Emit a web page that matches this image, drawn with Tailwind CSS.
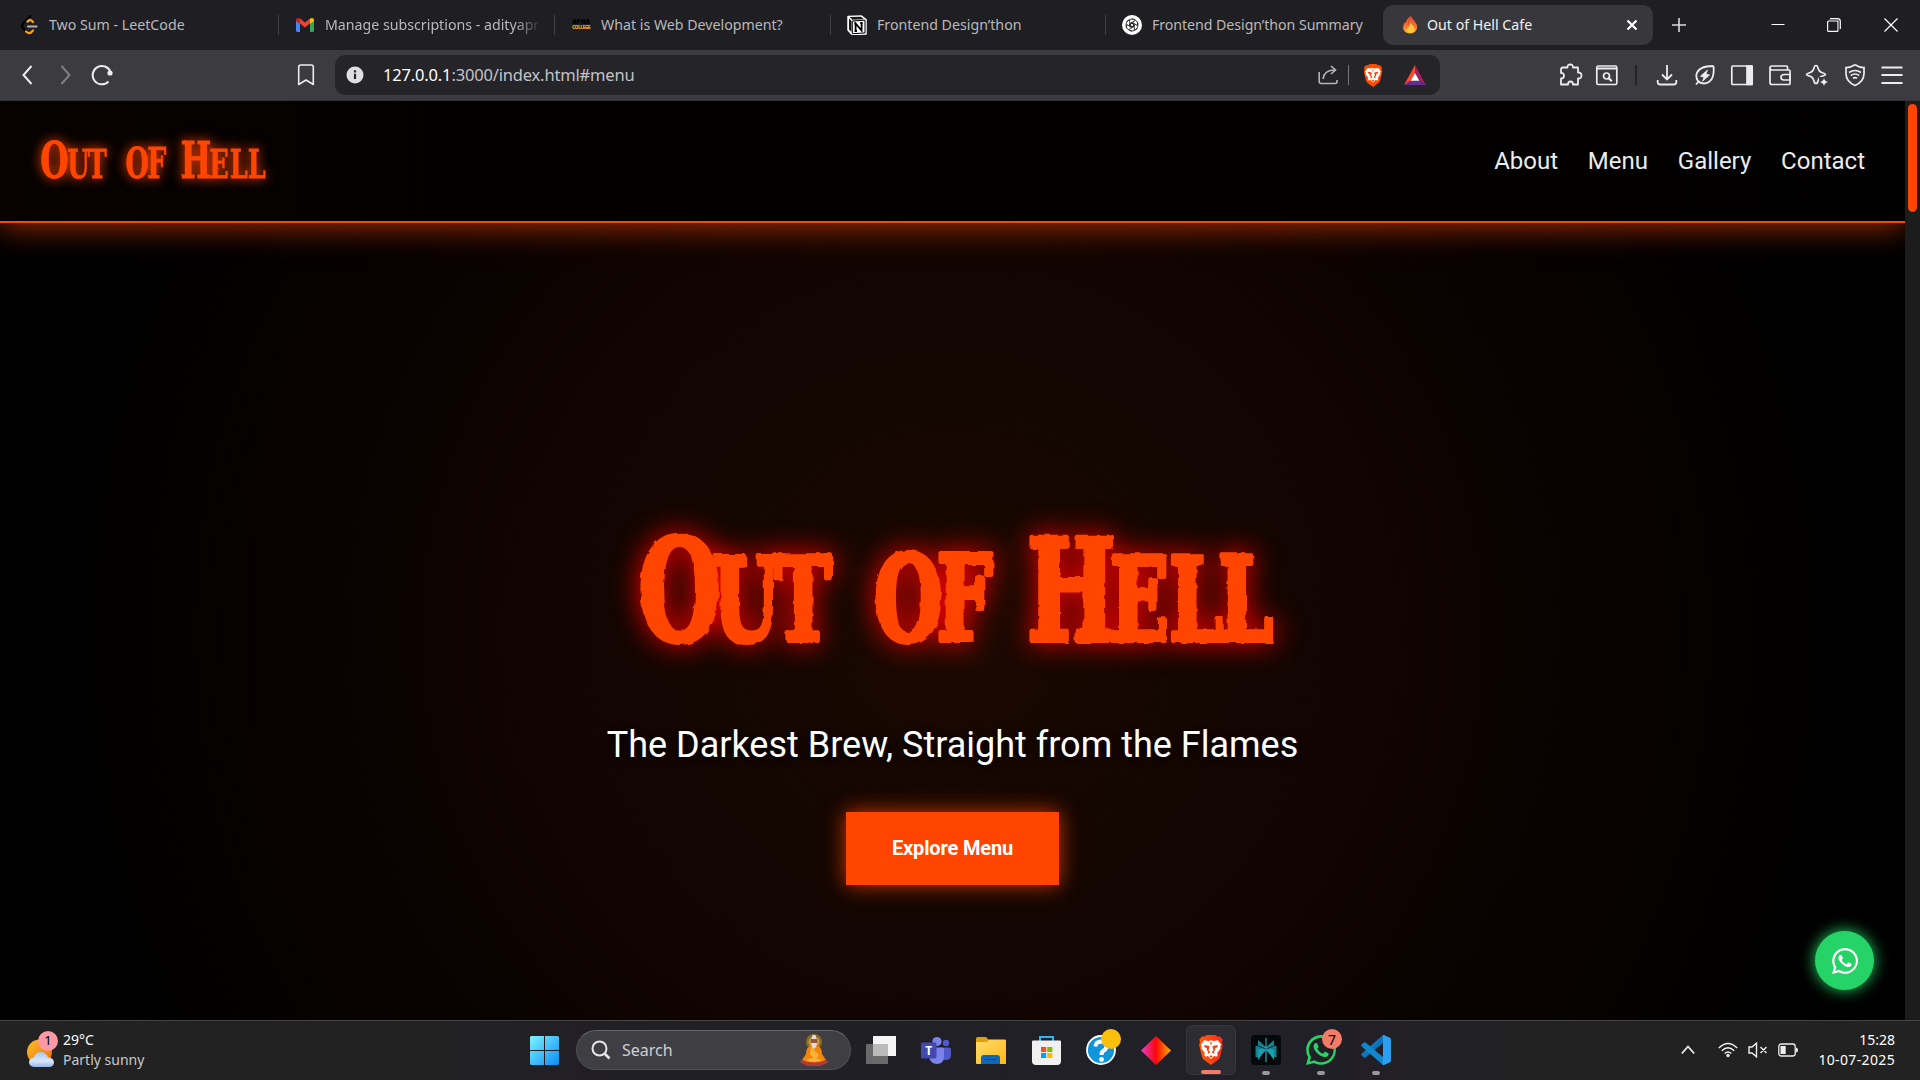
<!DOCTYPE html>
<html lang="en">
<head>
<meta charset="utf-8">
<title>Out of Hell Cafe</title>
<script src="https://cdn.jsdelivr.net/npm/@tailwindcss/browser@4"></script>
</head>
<body class="w-[1920px] h-[1080px] overflow-hidden bg-black font-['Noto_Sans',sans-serif]">
<svg class="absolute size-0" aria-hidden="true">
  <defs>
    <symbol id="brave" viewBox="0 0 24 28">
      <path d="M6 1.5 8 0h8l2 1.5 2.5 0L23 4.500l-.8 2 .9 2.500-2.600 11c-.4 1.600-1.200 2.500-2.500 3.500l-5 3.900c-.7.500-1.300.500-2 0l-5-3.900C4.700 22.500 3.900 21.600 3.500 20L.9 9l.9-2.500L1 4.500l2.500-3z"/>
      <path fill="#fff" d="m5.500 5 4 .6 2.500-.8 2.500.8 4-.6 3 4-.9 1.800.3 1.700-3.200 4.200.6 2.300-1.300 1.200-2-.6L12 22.500l-3-2.900-2 .6L5.700 19l.6-2.300-3.200-4.200.3-1.700L2.500 9z"/>
      <path class="text-[#f4430a]" fill="currentColor" d="m6 9.300 4.300.9.200 1-.8 3.200 1.500 1.300-.2.900-2.500 1.200.9-1.800-1.500-2.500.4-1.200-2.600-1zM18 9.300l-4.300.9-.2 1 .8 3.200-1.500 1.300.2.900 2.500 1.200-.9-1.800 1.500-2.500-.4-1.200 2.600-1zM12 19l1.700.9L12 21.300l-1.700-1.400zM11.400 6.500h1.200l-.3 3h-.6z"/>
    </symbol>
    <symbol id="whatsapp" viewBox="0 0 24 24">
      <path d="M17.472 14.382c-.297-.149-1.758-.867-2.030-.967-.273-.099-.471-.148-.670.150-.197.297-.767.966-.940 1.164-.173.199-.347.223-.644.075-.297-.150-1.255-.463-2.390-1.475-.883-.788-1.480-1.761-1.653-2.059-.173-.297-.018-.458.130-.606.134-.133.298-.347.446-.520.149-.174.198-.298.298-.497.099-.198.050-.371-.025-.520-.075-.149-.669-1.612-.916-2.207-.242-.579-.487-.500-.669-.510-.173-.008-.371-.010-.570-.010-.198 0-.520.074-.792.372-.272.297-1.040 1.016-1.040 2.479 0 1.462 1.065 2.875 1.213 3.074.149.198 2.096 3.200 5.077 4.487.709.306 1.262.489 1.694.625.712.227 1.360.195 1.871.118.571-.085 1.758-.719 2.006-1.413.248-.694.248-1.289.173-1.413-.074-.124-.272-.198-.570-.347z"/>
      <path d="M.06 24l1.690-6.160A11.860 11.860 0 0 1 .16 11.890 11.890 11.890 0 1 1 6.360 22.340zM6.600 20.190l.390.230a9.870 9.870 0 1 0-3.170-3.110l.240.380-1 3.650z"/>
    </symbol>
    <linearGradient id="win" gradientUnits="userSpaceOnUse" x1="0" y1="0" x2="29" y2="29"><stop offset="0" stop-color="#7df4ff"/><stop offset="1" stop-color="#0a8cf5"/></linearGradient>
    <linearGradient id="sun" x1="0" y1="0" x2="1" y2="1"><stop offset="0" stop-color="#fbc02d"/><stop offset="1" stop-color="#ef6c00"/></linearGradient>
    <linearGradient id="cloud" x1="0" y1="0" x2="0" y2="1"><stop offset="0" stop-color="#a9c6f5"/><stop offset=".6" stop-color="#d8e6fb"/><stop offset="1" stop-color="#94b6ee"/></linearGradient>
    <linearGradient id="folder" x1="0" y1="0" x2="1" y2="1"><stop offset="0" stop-color="#ffdc6b"/><stop offset="1" stop-color="#fbb917"/></linearGradient>
    <linearGradient id="gem" x1="0" y1="0" x2="1" y2="0"><stop offset="0" stop-color="#f03bd0"/><stop offset=".5" stop-color="#f90606"/><stop offset="1" stop-color="#fbb204"/></linearGradient>
    <linearGradient id="flame" x1="0" y1="0" x2="0" y2="1"><stop offset="0" stop-color="#e8473a"/><stop offset=".6" stop-color="#f4792f"/><stop offset="1" stop-color="#fdb734"/></linearGradient>
    <linearGradient id="braveg" x1="0" y1="0" x2="1" y2="0"><stop offset="0" stop-color="#ff5a0a"/><stop offset="1" stop-color="#fb2a12"/></linearGradient>
    <filter id="rough" x="-5%" y="-10%" width="110%" height="120%"><feTurbulence type="fractalNoise" baseFrequency=".1" numOctaves="2" seed="4"/><feDisplacementMap in="SourceGraphic" scale="4"/></filter>
    <filter id="rough2" x="-5%" y="-10%" width="110%" height="120%"><feTurbulence type="fractalNoise" baseFrequency=".3" numOctaves="2" seed="4"/><feDisplacementMap in="SourceGraphic" scale="1.500"/></filter>
  </defs>
</svg>

<!-- Tab strip -->
<div class="flex h-[50px] items-center bg-[#1f1e23] pl-[3px] text-[14.2px] whitespace-nowrap text-[#b9b9bb]">
  <div class="flex h-5 w-[276px] items-center gap-[10px] border-r border-[#434247] pl-4">
    <svg class="size-5" viewBox="0 0 20 20" fill="none" stroke-width="2.200" stroke-linecap="round"><path stroke="#000" d="M11.500 1 4 8.500q-2 2 0 4.500l3 3.500"/><path stroke="#ffa116" d="m8.500 6.500 2-1.500q1.500-.5 3.500 2M7 16.500q3 2.500 5 1l2-2"/><path stroke="#b3b3b3" d="M9 11.500h8.500"/></svg>
    <span>Two Sum - LeetCode</span>
  </div>
  <div class="flex h-5 w-[276px] items-center gap-[10px] border-r border-[#434247] pl-4">
    <svg class="size-5" viewBox="0 0 20 20"><path fill="#4285f4" d="M1 5v10.500q0 1.500 1.500 1.500H5V8z"/><path fill="#34a853" d="M19 5v10.500q0 1.500-1.500 1.500H15V8z"/><path fill="#ea4335" d="M5 8.500V3.500l5 4 5-4v5l-5 4z"/><path fill="#c5221f" d="M1 5q0-2 2-2 1 0 2 .7v5L1 6z"/><path fill="#fbbc04" d="M19 5q0-2-2-2-1 0-2 .7v5L19 6z"/></svg>
    <span class="w-[216px] overflow-hidden [mask-image:linear-gradient(90deg,#000_88%,transparent)]">Manage subscriptions - adityapra</span>
  </div>
  <div class="flex h-5 w-[276px] items-center gap-[10px] border-r border-[#434247] pl-4">
    <span class="flex w-5 flex-col items-center text-[6px] leading-[5px] font-black"><span class="text-black">APNA</span><span class="text-[5px] tracking-[-0.6px] text-[#e69a13]">COLLEGE</span></span>
    <span>What is Web Development?</span>
  </div>
  <div class="flex h-5 w-[275px] items-center gap-[10px] border-r border-[#434247] pl-4">
    <svg class="size-5" viewBox="0 0 20 20"><path fill="#fff" stroke="#fff" stroke-width="1.500" stroke-linejoin="round" d="M1 1.500 14.500 1 19 4.500V19L5 19.500 1 15z"/><path fill="#1a1a1a" d="M2.500 2 14 1.700l3 2.500-11.500.6zM2 3.500 4.500 6v11L2 14.500z"/><path fill="#fff" d="M5.500 6 18 5.200V18L5.500 18.500z"/><path fill="none" stroke="#000" stroke-width="1" d="M5.300 6 18 5.200V18L5.300 18.700z"/><path fill="none" stroke="#000" stroke-width="1.800" d="M8.600 16V8.500l6 7V8M7.300 8.500h2M13.200 8h2.500M7.500 16H10"/></svg>
    <span>Frontend Design’thon</span>
  </div>
  <div class="flex h-5 w-[277px] items-center gap-[10px] pl-4">
    <svg class="size-5" viewBox="0 0 20 20"><circle cx="10" cy="10" r="10" fill="#fff"/><g fill="none" stroke="#222" stroke-width=".9"><path id="petal" d="M10 3.800a3 3 0 0 1 2.800 2l-4.300 2.500v4"/><use href="#petal" transform="rotate(60 10 10)"/><use href="#petal" transform="rotate(120 10 10)"/><use href="#petal" transform="rotate(180 10 10)"/><use href="#petal" transform="rotate(240 10 10)"/><use href="#petal" transform="rotate(300 10 10)"/><circle cx="10" cy="10" r="6"/></g></svg>
    <span class="tracking-[-0.06px]">Frontend Design’thon Summary</span>
  </div>
  <div class="flex h-10 w-[270px] items-center rounded-[10px] bg-[#38373c] pl-[17px] text-[#f1f1f2]">
    <svg class="h-5 w-5" viewBox="0 0 20 20"><path fill="url(#flame)" d="M11 1q1 2.500 3.500 5 3 3.500 2.500 7-.7 5-7 5.500-6.500-.5-7-6 0-3.500 2-5.500l.7 1.500Q6 4 11 1"/><path fill="#fdc83b" d="M11 8q1 2 2.600 3.700 1.400 2 .4 4.300-1.200 2-4 2-3-.3-3.600-3Q8.500 13 11 8"/><path stroke="#c9432c" stroke-width=".6" fill="none" d="M11 2q-3 3-3 8"/></svg>
    <span class="ml-[7px]">Out of Hell Cafe</span>
    <svg class="ml-auto mr-[15px] h-3 w-3" viewBox="0 0 12 12" stroke="#fff" stroke-width="2.200"><path d="m1.500 1.500 9 9m0-9-9 9"/></svg>
  </div>
  <svg class="ml-[19px] h-[14px] w-[14px]" viewBox="0 0 14 14" stroke="#d9d9da" stroke-width="1.600"><path d="M7 0v14M0 7h14"/></svg>
  <svg class="-mt-[3px] ml-[85px] h-3 w-[14px]" viewBox="0 0 14 12" stroke="#fff"><path d="M.5 6.500h13"/></svg>
  <svg class="ml-[42px] h-[14px] w-[14px]" viewBox="0 0 14 14" stroke="#fff" stroke-width="1.200" fill="none"><rect x=".6" y="3" width="10.400" height="10.400" rx="1"/><path d="M3 .7h7.500q2.800 0 2.800 2.800V11" /><path stroke="#88888b" d="M2 2.200h9.500V12"/></svg>
  <svg class="ml-[43px] h-[14px] w-[14px]" viewBox="0 0 14 14" stroke="#fff" stroke-width="1.200"><path d="m.5.5 13 13m0-13-13 13"/></svg>
</div>

<!-- Toolbar -->
<div class="flex h-[51px] items-center border-b border-[#323136] bg-[#3c3b40] pl-4 text-[#ececee]">
  <svg class="size-6" viewBox="0 0 24 24" fill="none" stroke="currentColor" stroke-width="2"><path d="m15.500 3-8 9 8 9"/></svg>
  <svg class="ml-[13px] size-6 text-[#808083]" viewBox="0 0 24 24" fill="none" stroke="currentColor" stroke-width="2"><path d="m8.500 3 8 9-8 9"/></svg>
  <svg class="ml-[13px] size-6" viewBox="0 0 24 24" fill="none" stroke="currentColor" stroke-width="2"><path d="M18.500 18.500A9.200 9.200 0 1 1 20.500 9"/><circle cx="20" cy="10" r="2.600" fill="currentColor" stroke="none"/></svg>
  <svg class="ml-[180px] size-6" viewBox="0 0 24 24" fill="none" stroke="currentColor" stroke-width="1.600" stroke-linejoin="round"><path d="M4.700 4q0-2 2-2h10.600q2 0 2 2v17.500L12 17l-7.300 4.500z"/></svg>
  <div class="ml-[17px] flex h-10 w-[1105px] items-center rounded-[10px] bg-[#252429] pl-[11px]">
    <svg class="size-[18px]" viewBox="0 0 18 18"><circle cx="9" cy="9" r="8.500" fill="#dedee3"/><path stroke="#252429" stroke-width="2.200" d="M9 7.800V13M9 4.200v2.200"/></svg>
    <span class="ml-[19px] text-[16.5px] tracking-[-0.17px] whitespace-nowrap text-[#c3c3c6]"><span class="text-white">127.0.0.1</span>:3000/index.html#menu</span>
    <svg class="ml-auto size-5 text-[#b5b5b8]" viewBox="0 0 20 20" fill="none" stroke="currentColor" stroke-width="1.600"><path d="M1.200 7v9.500q0 2 2 2H17q2 0 2-2V15"/><path d="M5 14Q6 5 17 5M13 1l4.500 4L13 9"/></svg>
    <span class="ml-[10px] h-5 w-px bg-[#77777a]"></span>
    <svg class="ml-[14px] h-[23px] w-5 fill-[#ff4d00]" viewBox="0 0 24 28" preserveAspectRatio="none"><use href="#brave" width="24" height="28"/></svg>
    <svg class="mr-[14px] ml-[21px] h-5 w-[22px]" viewBox="0 0 22 20"><path fill="#ff4724" d="M11 0 0 20l7-4.500L11 8z"/><path fill="#9e1f63" d="m11 0 11 20-7-4.500L11 8z"/><path fill="#662d91" d="M0 20h22l-7-4.500H7z"/><path fill="#fff" d="m11 8 4.300 7.700H6.700z"/></svg>
  </div>
  <svg class="ml-[119px] size-6" viewBox="0 0 24 24" fill="none" stroke="currentColor" stroke-width="1.800" stroke-linejoin="round"><path d="M4 4.500h4.500q-.3-3 2.700-3t2.800 3H19v5q3.500-.2 3.500 3t-3.500 3v6h-5q0-3-2.500-3T9 21.500H2v-6q3 0 3-2.800T2 10V6.500q0-2 2-2"/></svg>
  <svg class="ml-3 size-6" viewBox="0 0 24 24" fill="none" stroke="currentColor" stroke-width="1.700"><rect x="1.800" y="3" width="20" height="18.500" rx="1.500"/><path d="M2 5.500h20" stroke-width="2"/><circle cx="11.500" cy="13" r="3"/><path stroke-width="2.200" d="m13.800 15.300 3 3"/></svg>
  <span class="ml-4 h-5 w-[2px] bg-[#242328]"></span>
  <div class="ml-[18px] flex gap-[13.5px]">
    <svg class="size-6" viewBox="0 0 24 24" fill="none" stroke="currentColor" stroke-width="1.800"><path d="M12 2v14M7 11.500l5 5 5-5M2.700 17v2q0 2.500 2.500 2.500h13.600q2.500 0 2.500-2.500v-2"/></svg>
    <svg class="size-6" viewBox="0 0 24 24" fill="none" stroke="currentColor" stroke-width="1.800" stroke-linejoin="round"><path d="M20.500 3q.8 8-1.500 12.500-3 5-8 5-8-.5-7.700-8.500Q5 3 20.500 3M3 21.500 6 18"/><path fill="currentColor" stroke-width=".8" d="m14.500 7-7 6.200 3.500 1-1.500 4 7-6.200-3.500-1z"/></svg>
    <svg class="size-6" viewBox="0 0 24 24" fill="none" stroke="currentColor" stroke-width="1.700"><rect x="1.800" y="3" width="20.400" height="18.500" rx="1"/><path fill="currentColor" d="M17 3h5v18.500h-5z"/></svg>
    <svg class="size-6" viewBox="0 0 24 24" fill="none" stroke="currentColor" stroke-width="1.700"><path d="M2 5v14.500q0 2 2 2h17q1 0 1-1V8q0-1-1-1H4Q2 7 2 5t2-2h14.500q1 0 1 1v3"/><path d="M22 11.500h-6q-3 0-3 2.700t3 2.800h6z"/></svg>
    <svg class="size-6" viewBox="0 0 24 24" fill="none" stroke="currentColor" stroke-width="1.700" stroke-linejoin="round"><path d="M11 2.500q1.500 0 2 2.500 1 4 5 5 2.500.7 2.500 1.500t-2.500 1.300q-4 1-5 5.200-.5 2.500-2 2.500t-2-2.500q-1-4-5-5.200-2.500-.5-2.500-1.300T4 10q4-1 5-5 .5-2.500 2-2.500"/><path fill="#3c3b40" stroke="none" d="M14 14h10v10H14z"/><path fill="currentColor" stroke="none" d="M19 15q.5 3 4 4-3.500 1-4 4-.5-3-4-4 3.500-1 4-4"/></svg>
    <svg class="size-6" viewBox="0 0 24 24" fill="none" stroke="currentColor" stroke-width="1.700"><path d="M12 1.800q5 3 9 2.700v6q0 8-9 12-9-4-9-12v-6q4 .3 9-2.700"/><path d="M6 9.500q6-4 12 0M7.800 12.500q4.200-3 8.400 0M10 15.300q2-1.300 4 0"/></svg>
    <svg class="size-6" viewBox="0 0 24 24" stroke="currentColor" stroke-width="1.800"><path d="M1.500 4.500h21M1.500 12h21M1.500 20h21"/></svg>
  </div>
</div>

<!-- Page viewport -->
<div class="flex h-[919px] bg-[#1c1c1c]">
  <div class="relative flex h-full w-[1905px] flex-col overflow-hidden bg-[radial-gradient(circle_at_50%_58%,#1e0a01_0px,#160701_130px,#120501_400px,#080200_640px,#020100_850px,#000_1000px)] font-['Roboto',sans-serif] text-white">
    <nav class="flex h-[122px] shrink-0 items-center justify-between border-b-2 border-[#ff4500] bg-[linear-gradient(90deg,#070201,#020100_30%,#020101)] pr-10 pl-10 shadow-[0_2px_30px_#ff4500b0]">
      <svg class="h-[60px] w-[240px] overflow-visible drop-shadow-[0_0_6px_#ff4500]" viewBox="40 130.500 240 60">
        <g filter="url(#rough2)"><text transform="scale(.64 1)" class="fill-[#ff4500] stroke-[#ff4500] stroke-[0.8px] font-['DejaVu_Serif',serif] text-[51px] font-bold uppercase" y="178"><tspan x="63">O</tspan><tspan class="text-[40px]" x="105 137">ut</tspan> <tspan class="text-[42px]" x="196 230">of</tspan> <tspan x="282">H</tspan><tspan class="text-[40px]" x="327 359 387">ell</tspan></text></g>
      </svg>
      <div class="flex gap-[29.8px] text-[24px] text-[#ececec]"><a>About</a><a>Menu</a><a>Gallery</a><a>Contact</a></div>
    </nav>
    <main class="flex flex-1 flex-col items-center pt-[275px]">
      <h1 class="h-[180px] w-[720px]">
        <svg class="h-[180px] w-[720px] overflow-visible drop-shadow-[0_0_14px_#ff0000]" viewBox="593 498 720 180">
          <g filter="url(#rough)"><text transform="scale(.67 1)" class="fill-[#ff4500] stroke-[#ff4500] stroke-[6px] font-['DejaVu_Serif',serif] text-[141px] font-bold uppercase [stroke-linejoin:round]" y="640"><tspan x="953">O</tspan><tspan class="text-[115px]" x="1064 1156">ut</tspan> <tspan class="text-[117px]" x="1305 1398">of</tspan> <tspan x="1533">H</tspan><tspan class="text-[115px]" x="1657 1745 1819">ell</tspan></text></g>
        </svg>
      </h1>
      <p class="mt-[42px] text-[36px] leading-[50px] whitespace-nowrap text-white [text-shadow:2px_2px_8px_#000]">The Darkest Brew, Straight from the Flames</p>
      <button class="mt-[42px] flex h-[73px] w-[213px] items-center justify-center bg-[#ff4500] pb-px text-[20px] font-bold tracking-[-0.15px] shadow-[0_0_20px_#ff4500cc]">Explore Menu</button>
    </main>
    <a class="absolute top-[830px] left-[1815px] flex size-[59px] items-center justify-center rounded-full bg-[#25d366] shadow-[0_0_15px_#25d366]"><svg class="size-[26px] fill-white"><use href="#whatsapp"/></svg></a>
  </div>
  <div class="mt-[3px] ml-[3px] h-[108px] w-[9px] rounded-full bg-[#ff4500]"></div>
</div>

<!-- Taskbar -->
<div class="flex h-[60px] items-center border-t border-[#454545] bg-[linear-gradient(90deg,#222,#212121_22%,#211f26_32%,#211f27_68%,#212121_80%,#222)] pb-px text-white">
  <div class="flex w-[530px] items-center pl-[26px]">
    <div class="relative h-10 w-[37px]">
      <svg class="h-10 w-[38px]" viewBox="0 0 38 40"><circle cx="13.500" cy="22" r="12.500" fill="url(#sun)"/><path fill="url(#cloud)" d="M7.500 37q-4.500-1-4.500-5 .5-4 4.500-4.300Q10 22 15 22t7 5.500q5.500 0 6 4.700 0 4-4.500 4.800z"/></svg>
      <span class="absolute top-[1px] left-3 flex size-5 items-center justify-center rounded-full bg-[#ff99a4] text-[13px] text-black">1</span>
    </div>
    <div class="flex flex-col pb-px text-[14px] leading-5"><span class="text-white">29°C</span><span class="text-[#c8c8c8]">Partly sunny</span></div>
  </div>
  <svg class="h-[29px] w-[29px]" viewBox="0 0 29 29" fill="url(#win)"><path d="M1 0h13v14H0V1zM15 0h13l1 1v13H15zM0 15h14v14H1l-1-1zM15 15h14v13l-1 1H15z"/></svg>
  <div class="ml-[17px] flex h-10 w-[275px] items-center rounded-full border border-[#504f54] border-t-[#68676b] bg-[#3f3e43] pl-[14px]">
    <svg class="size-5" viewBox="0 0 20 20" fill="none" stroke="#e4e6ea" stroke-width="2"><circle cx="8.500" cy="8.500" r="7"/><path stroke-width="2.600" d="m13.500 13.500 5 5"/></svg>
    <span class="ml-[11px] text-[16px] text-[#d0d0d2]">Search</span>
    <svg class="ml-auto mr-[21px] h-8 w-[30px]" viewBox="0 0 30 32"><circle cx="15" cy="8" r="8" fill="#8a6a25"/><circle cx="15" cy="8" r="5.500" fill="#c39a45"/><path fill="#b23a36" d="M0 27q15-4 30 0-2 3-9 5H9q-5-1-9-5"/><path fill="#f3850d" d="M11 12q4-2 8 0 4 2 4 8l4 6q-12 5-24 0l4-6q0-6 4-8"/><path fill="#ffb238" d="m12 13 8 8-4 5-5-6zM7 26q8-4 16 0-8 4-16 0"/><circle cx="15" cy="7" r="3.400" fill="#95583b"/><path fill="#ddd" d="M12 9h6l-1 4-2 2-2-2zM13.500 1h3l1 4h-5z"/></svg>
  </div>
  <div class="ml-[5px] flex items-center gap-[5px]">
    <div class="flex size-[50px] items-center justify-center"><svg class="h-7 w-[30px]" viewBox="0 0 30 28"><path fill="#696969" d="M1 8h21v20H1q-1 0-1-1V9q0-1 1-1"/><path fill="#f5f5f5" d="M8 0h22v20H8q-1 0-1-1V1q0-1 1-1"/><path fill="#bbb" d="M7 8h15v12H7z"/></svg></div>
    <div class="flex size-[50px] items-center justify-center"><svg class="size-[30px]" viewBox="0 0 30 30"><circle cx="25" cy="8" r="3.200" fill="#5059c9"/><path fill="#5059c9" d="M19 12.500h9q2 0 2 2V20q0 5-5 5h-5z"/><circle cx="16" cy="6.500" r="4.600" fill="#7b83eb"/><path fill="#7b83eb" d="M9 12.500h12q2 0 2 2V21q0 8-7 8t-8-8z"/><rect y="7.500" width="15.500" height="16" rx="1.500" fill="#4149b3"/><text x="7.800" y="19.800" text-anchor="middle" class="fill-white text-[12px] font-bold">T</text></svg></div>
    <div class="flex size-[50px] items-center justify-center"><svg class="h-[27px] w-[30px]" viewBox="0 0 30 27"><path fill="#e0a00c" d="M0 7V1.500Q0 0 1.500 0H10l3 3v4z"/><path fill="url(#folder)" d="M0 5h11l2-2.500h16q1 0 1 1V27H1q-1 0-1-1z"/><path fill="#0f66b8" d="M5 27v-6q0-3 3-3h13q3 0 3 3v6z"/><path stroke="#0a4380" d="M9 22.500h11"/></svg></div>
    <div class="flex size-[50px] items-center justify-center"><svg class="size-[29px]" viewBox="0 0 29 29"><path fill="none" stroke="#2cb6ee" stroke-width="2" d="M8 6V1h13v5"/><path fill="#f0f0f0" d="M1 4.500h27q1 0 1 1V25q0 4-4 4H4q-4 0-4-4V5.500q0-1 1-1"/><path fill="#f25022" d="M9 11h5.200v5H9z"/><path fill="#7fba00" d="M15.200 11h5.200v5h-5.200z"/><path fill="#00a4ef" d="M9 17h5.200v5H9z"/><path fill="#ffb900" d="M15.200 17h5.200v5h-5.200z"/></svg></div>
    <div class="relative flex size-[50px] items-center justify-center"><svg class="size-[30px]" viewBox="0 0 30 30"><circle cx="15" cy="15" r="14" fill="#0f95dc" stroke="#fff" stroke-width="1.800"/><path fill="none" stroke="#fff" stroke-width="4" d="M9.500 11.500Q10 6.500 15 6.500q5.500.5 5.500 5 0 2.500-3 4.300-2 1.200-2 4.200"/><circle cx="15.500" cy="24.500" r="2.400" fill="#fff"/></svg><span class="absolute top-[4px] left-[25px] size-5 rounded-full bg-[#fcbf0c]"></span></div>
    <div class="flex size-[50px] items-center justify-center"><svg class="h-[29px] w-[30px]" viewBox="0 0 30 29"><path fill="url(#gem)" d="M15 0 30 14.500 15 29 0 14.500z"/></svg></div>
    <div class="relative flex size-[50px] items-center justify-center rounded-md border border-[#38363d] bg-[#2e2c33]"><svg class="h-[30px] w-[26px]" viewBox="0 0 24 28" fill="url(#braveg)"><use href="#brave" width="24" height="28"/></svg><span class="absolute bottom-0 left-[14px] h-1 w-5 rounded-full bg-[#f47c66]"></span></div>
    <div class="relative flex size-[50px] items-center justify-center"><svg class="size-[30px]" viewBox="0 0 30 30"><rect width="30" height="30" rx="4" fill="#030809"/><path fill="#13808c" d="m7 5 8 7 8-7v6h2.500v11H23l-8-6-8 6H4.500V11H7z"/><path fill="#1b9fac" d="m7 25 8-11 8 11V15l-8-3-8 3z"/><path fill="none" stroke="#042d33" d="m7 11 8 3 8-3M15 14v14"/><path stroke="#28b7c4" d="M15 3v24"/></svg><span class="absolute bottom-0 left-[21px] h-1 w-2 rounded-full bg-[#98979b]"></span></div>
    <div class="relative flex size-[50px] items-center justify-center"><svg class="size-[30px] fill-[#25d366]"><use href="#whatsapp"/></svg><span class="absolute bottom-0 left-[21px] h-1 w-2 rounded-full bg-[#98979b]"></span><span class="absolute top-[4px] left-[26px] flex size-5 items-center justify-center rounded-full bg-[#f47c66] text-[14px] text-black">7</span></div>
    <div class="relative flex size-[50px] items-center justify-center"><svg class="size-[30px]" viewBox="0 0 30 30"><path fill="#0c74ba" d="M22 0v8L4.500 22.500q-.8.500-1.500 0L.7 20.500q-.9-1 0-2z"/><path fill="#1287d0" d="M22 30v-8L4.500 7.500Q3.700 7 3 7.500L.7 9.500q-.9 1 0 2z"/><path fill="#2b9ff0" d="M22 0q.5-.3 1 0l6 2.800q1 .5 1 1.700v21q0 1.200-1 1.700L23 30q-.5.300-1.500-.300L22 22z"/></svg><span class="absolute bottom-0 left-[21px] h-1 w-2 rounded-full bg-[#98979b]"></span></div>
  </div>
  <div class="ml-auto flex items-center pr-[25px]">
    <svg class="h-[10px] w-[14px]" viewBox="0 0 14 10" fill="none" stroke="#eee" stroke-width="1.800"><path d="m.8 8.500 6.200-7 6.200 7"/></svg>
    <svg class="ml-[23px] h-4 w-5" viewBox="0 0 20 16" fill="none" stroke="#eee" stroke-width="1.500"><path d="M.8 6Q10-3 19.200 6M3.800 8.800q6.200-6 12.400 0M6.700 11.500q3.300-3 6.600 0"/><circle cx="10" cy="13.500" r="1.700" fill="#eee" stroke="none"/></svg>
    <svg class="ml-[10px] h-4 w-5" viewBox="0 0 20 16" fill="none" stroke="#eee" stroke-width="1.400"><path d="M1 5h3l4.500-3.800v13.600L4 11H1zM12.500 5l6 6m0-6-6 6"/></svg>
    <svg class="ml-[10px] h-[14px] w-5" viewBox="0 0 20 14" fill="none" stroke="#eee" stroke-width="1.300"><rect x=".8" y="1" width="16.400" height="12" rx="2.500"/><path fill="#eee" stroke="none" d="M2.500 3h5.200v8H2.500zM18 4.500q2 0 2 2.500t-2 2.500z"/></svg>
    <div class="ml-[19px] flex w-[78px] flex-col items-end pb-px text-[14px] leading-5 whitespace-nowrap"><span>15:28</span><span class="tracking-[0.35px]">10-07-2025</span></div>
  </div>
</div>
</body>
</html>
